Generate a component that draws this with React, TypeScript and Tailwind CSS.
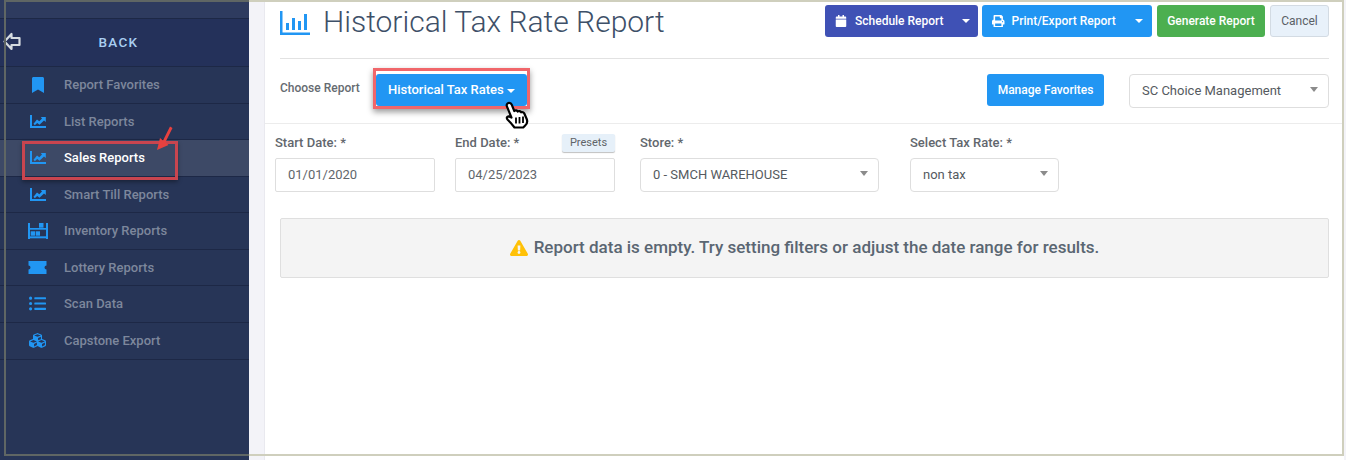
import type { ReactNode } from "react";
import { FaBookmark, FaCalendar, FaCubes, FaExclamationTriangle, FaListUl, FaPrint } from "react-icons/fa";

const InventoryIcon = () => (
  <svg width="20" height="16" viewBox="0 0 20 16" fill="#2196f3">
    <rect x="0" y="0" width="2" height="16" />
    <rect x="18" y="0" width="2" height="16" />
    <rect x="0" y="5" width="20" height="1.7" />
    <rect x="0" y="13.300" width="20" height="2" />
    <rect x="11" y="0" width="4.500" height="4.700" />
    <rect x="2.700" y="8.300" width="4.300" height="4.400" />
    <rect x="7.700" y="8.300" width="4.300" height="4.400" />
  </svg>
);

const TicketIcon = () => (
  <svg width="19" height="13" viewBox="0 0 19 13" fill="#2196f3">
    <path d="M0.5 0h18v4.500a2 2 0 0 0 0 4V13H0.500V8.500a2 2 0 0 0 0-4z" />
  </svg>
);

const ChartIcon = () => (
  <svg width="16" height="13" viewBox="0 0 16 13" fill="#2196f3">
    <path d="M0 0h2v11H16v2H0z" />
    <path d="M3.500 8.800 7 4.500l2.300 1.700L12 3.500 10.800 2H15.800V7L14 5.500l-4.500 4.300-2.300-1.800L4.800 10.300z" />
  </svg>
);

const menu: { label: string; icon: ReactNode; active?: boolean }[] = [
  { label: "Report Favorites", icon: <FaBookmark className="text-[#2196f3] text-[16px]" /> },
  { label: "List Reports", icon: <ChartIcon /> },
  { label: "Sales Reports", icon: <ChartIcon />, active: true },
  { label: "Smart Till Reports", icon: <ChartIcon /> },
  { label: "Inventory Reports", icon: <InventoryIcon /> },
  { label: "Lottery Reports", icon: <TicketIcon /> },
  { label: "Scan Data", icon: <FaListUl className="text-[#2196f3] text-[17px]" /> },
  { label: "Capstone Export", icon: <FaCubes className="text-[#2196f3] text-[17px]" /> },
];

function Caret({ className }: { className: string }) {
  return <span className={`inline-block border-x-[4px] border-t-[4px] border-x-transparent ${className}`} />;
}

function SelectBox({ value, className }: { value: string; className: string }) {
  return (
    <div className={`flex h-[34px] items-center justify-between rounded-[4px] border border-[#dedede] bg-white pl-[12px] pr-[10px] text-[13px] text-[#555a60] ${className}`}>
      <span>{value}</span>
      <Caret className="mb-[3px] border-x-[4px] border-t-[5px] border-t-[#8b8b8b]" />
    </div>
  );
}

function Field({ label, className, children }: { label: string; className: string; children: ReactNode }) {
  return (
    <div className={className}>
      <div className="mb-[6px] h-[18px] text-[13px] font-medium leading-[18px] text-[#62676d]">{label}</div>
      {children}
    </div>
  );
}

function DateInput({ value }: { value: string }) {
  return (
    <div className="flex h-[34px] items-center rounded-[2px] border border-[#dedede] bg-white pl-[12px] text-[13px] text-[#61666c]">{value}</div>
  );
}

export default function App() {
  return (
    <div className="relative flex h-[460px] w-[1346px] overflow-hidden bg-[#f3f3f8] font-['Roboto',sans-serif]">
      {/* Sidebar */}
      <aside className="w-[249px] shrink-0 bg-[#273557]">
        <div className="h-[19px] border-b border-[#1d2846] bg-[#2e3b5f]" />
        <div className="relative flex h-[48px] items-center justify-center border-b border-[#1d2846] bg-[#24315a] pr-[12px]">
          <svg className="absolute left-[3px] top-[13px]" width="18" height="19" viewBox="0 0 18 19" fill="none" stroke="#d5dbe0" strokeWidth="2.200" strokeLinejoin="round">
            <path d="M1.500 9.500 8.500 2V6H16.500V13H8.500V17Z" />
          </svg>
          <span className="text-[13.5px] font-medium tracking-[1.3px] text-[#a9cff2]">BACK</span>
        </div>
        {menu.map((item) => (
          <div
            key={item.label}
            className={`flex h-[36.5px] items-center border-b border-[#1d2846] last:h-[37.5px] ${item.active ? "bg-[#3d4966]" : ""}`}
          >
            <span className="flex w-[64px] shrink-0 justify-center pl-[12px] pr-[1px]">{item.icon}</span>
            <span className={`text-[13px] font-medium ${item.active ? "text-white" : "text-[#7d879c]"}`}>{item.label}</span>
          </div>
        ))}
      </aside>
      <div className="w-[16px] shrink-0 border-r border-[#e9e9ef] bg-[#f3f3f8]" />

      {/* Main */}
      <main className="w-[1079px] shrink-0 bg-white">
        <div className="ml-[15px] mr-[15px] flex h-[59px] items-start justify-between border-b border-[#e2e2e2] pt-[5px]">
          <div className="flex items-center">
            <svg className="mt-[1px]" width="30" height="24" viewBox="0 0 30 24" fill="#2196f3">
              <path d="M0 0h2.500v21.500H30V24H0z" />
              <rect x="6" y="12" width="3" height="7" />
              <rect x="12" y="7" width="3" height="12" />
              <rect x="18" y="10" width="3" height="9" />
              <rect x="24" y="3" width="3" height="16" />
            </svg>
            <h1 className="ml-[13px] text-[30px] font-light leading-[34px] text-[#3e5068]">Historical Tax Rate Report</h1>
          </div>
          <div className="flex text-[12px] font-medium text-white">
            <div className="flex h-[32px] w-[153px] items-center rounded-[3px] bg-[#3f51b5] pl-[10px]">
              <FaCalendar className="text-[12px]" />
              <span className="ml-[8px]">Schedule Report</span>
              <Caret className="ml-[18px] border-t-white" />
            </div>
            <div className="ml-[4px] flex h-[32px] w-[170px] items-center rounded-[3px] bg-[#2196f3] pl-[10px]">
              <FaPrint className="text-[12.5px]" />
              <span className="ml-[7px]">Print/Export Report</span>
              <Caret className="ml-[19px] border-t-white" />
            </div>
            <div className="ml-[5px] flex h-[32px] w-[108px] items-center justify-center rounded-[3px] bg-[#4caf50]">Generate Report</div>
            <div className="ml-[5px] flex h-[32px] w-[59px] items-center justify-center rounded-[3px] border border-[#d3dbe3] bg-[#e8f1fa] font-normal text-[#5a6066]">Cancel</div>
          </div>
        </div>

        <div className="flex h-[65px] items-start border-b border-[#ececec] pl-[15px] pr-[15px] pt-[15px]">
          <span className="mt-[6px] w-[96px] text-[12px] font-medium leading-[16px] text-[#666b71]">Choose Report</span>
          <div className="flex h-[32px] w-[151px] items-center rounded-[3px] bg-[#2196f3] pl-[12px] text-[13px] font-medium text-white">
            Historical Tax Rates
            <Caret className="ml-[3px] mt-[1px] border-t-white" />
          </div>
          <div className="ml-[460px] flex h-[32px] w-[117px] items-center justify-center rounded-[3px] bg-[#2196f3] text-[12px] font-medium text-white">Manage Favorites</div>
          <SelectBox value="SC Choice Management" className="ml-[25px] w-[200px] rounded-[3px]" />
        </div>

        <div className="flex pl-[10px] pt-[10px]">
          <Field label="Start Date: *" className="w-[160px]">
            <DateInput value="01/01/2020" />
          </Field>
          <Field label="End Date: *" className="relative ml-[20px] w-[160px]">
            <span className="absolute right-0 top-0 flex h-[18px] w-[53px] items-center justify-center rounded-[2px] bg-[#e6f0f9] text-[11px] text-[#5f6468] shadow-[0_1px_1px_rgba(0,0,0,0.25)]">Presets</span>
            <DateInput value="04/25/2023" />
          </Field>
          <Field label="Store: *" className="ml-[25px] w-[239px]">
            <SelectBox value="0 - SMCH WAREHOUSE" className="w-full" />
          </Field>
          <Field label="Select Tax Rate: *" className="ml-[31px] w-[149px]">
            <SelectBox value="non tax" className="w-full" />
          </Field>
        </div>

        <div className="ml-[15px] mt-[26px] flex h-[60px] w-[1049px] items-center justify-center rounded-[2px] border border-[#dfdfdf] bg-[#f4f4f4] text-[17px] font-medium text-[#5a6672]">
          <FaExclamationTriangle className="mr-[6px] text-[18px] text-[#ffc107]" />
          Report data is empty. Try setting filters or adjust the date range for results.
        </div>
      </main>
      <div className="flex-1 bg-[#f3f3f8]" />

      {/* Annotations drawn on top of the screenshot */}
      <div className="pointer-events-none absolute left-[4px] top-0 h-[456px] w-[245px] border-y-2 border-l-2 border-[#5f6664]" />
      <div className="pointer-events-none absolute left-[249px] top-0 h-[456px] w-[1095px] border-y-2 border-r-2 border-[#cfcfbd]" />
      <div className="pointer-events-none absolute left-[22px] top-[140.500px] h-[39px] w-[156px] border-[3px] border-[#c9454f] shadow-[0_2px_4px_rgba(0,0,0,0.35)]" />
      <div className="pointer-events-none absolute left-[373px] top-[68px] h-[41px] w-[157px] border-[3px] border-[#f0666a] shadow-[0_3px_6px_rgba(0,0,0,0.4)]" />
      <svg className="pointer-events-none absolute left-[155px] top-[125px]" width="22" height="28" viewBox="0 0 22 28" fill="#e8413f">
        <path d="M15 1.500 17.500 3 10.500 17 13.500 20 2 25 5 13 8 15.500Z" />
      </svg>
      <svg className="pointer-events-none absolute left-[504px] top-[101px]" width="28" height="29" viewBox="0 0 28 29">
        <path d="M3.500 2.500c1.500-1.200 3.500-.5 4.200 1.200l2.600 6.300c1-1 2.700-.8 3.400.5 1-.8 2.700-.5 3.400.8 1.100-.5 2.700 0 3.200 1.200l2.400 5.500c1 2.600.2 5-1.500 6.500l-2 2H10.500c-1.500-2-4-5.300-6.800-7.800-1.700-1.700-.6-3.600 1.300-3.300l2.500 1.200L2.800 5.200c-.3-1-.1-2 .7-2.700z" fill="#fff" stroke="#000" strokeWidth="2.200" strokeLinejoin="round" />
        <path d="M12 16.500v6M15.500 16v6.500M19 15.500v6.500" stroke="#000" strokeWidth="1.800" />
      </svg>
    </div>
  );
}
